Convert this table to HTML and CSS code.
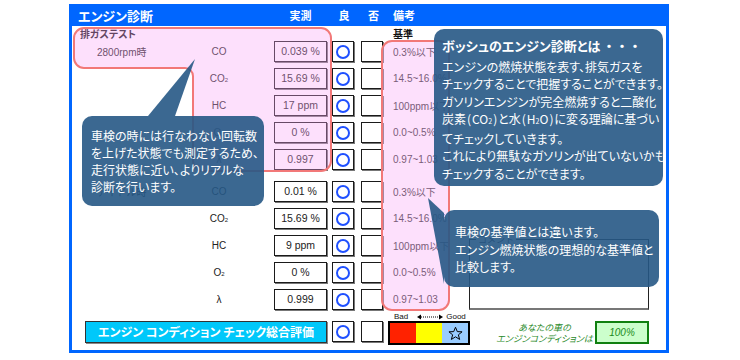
FILE: index.html
```html
<!DOCTYPE html>
<html lang="ja">
<head>
<meta charset="utf-8">
<link rel="stylesheet" href="styles.css">
</head>
<body>
<div class="frame">
  <div class="hdr">
    <div class="title">エンジン診断</div>
    <div class="h-val">実測</div>
    <div class="h-ok">良</div>
    <div class="h-ng">否</div>
    <div class="h-ref">備考</div>
  </div>
  <div class="body">
    <div class="table">
      <div class="sub"><span class="sub-title">排ガステスト</span><span class="sub-ref">基準</span></div>
      <div class="group g1">
        <div class="row"><div class="c-grp">2800rpm時</div><div class="c-gas">CO</div><div class="c-val">0.039 %</div><div class="box c-ok"><span class="ring"></span></div><div class="box c-ng"></div><div class="c-ref">0.3%以下</div></div>
        <div class="row"><div class="c-grp"></div><div class="c-gas">CO<span class="s2">2</span></div><div class="c-val">15.69 %</div><div class="box c-ok"><span class="ring"></span></div><div class="box c-ng"></div><div class="c-ref">14.5~16.0%</div></div>
        <div class="row"><div class="c-grp"></div><div class="c-gas">HC</div><div class="c-val">17 ppm</div><div class="box c-ok"><span class="ring"></span></div><div class="box c-ng"></div><div class="c-ref">100ppm以下</div></div>
        <div class="row"><div class="c-grp"></div><div class="c-gas">O<span class="s2">2</span></div><div class="c-val">0 %</div><div class="box c-ok"><span class="ring"></span></div><div class="box c-ng"></div><div class="c-ref">0.0~0.5%</div></div>
        <div class="row"><div class="c-grp"></div><div class="c-gas">λ</div><div class="c-val">0.997</div><div class="box c-ok"><span class="ring"></span></div><div class="box c-ng"></div><div class="c-ref">0.97~1.03</div></div>
      </div>
      <div class="group g2">
        <div class="row"><div class="c-grp idle">アイドル時</div><div class="c-gas">CO</div><div class="c-val">0.01 %</div><div class="box c-ok"><span class="ring"></span></div><div class="box c-ng"></div><div class="c-ref">0.3%以下</div></div>
        <div class="row"><div class="c-grp"></div><div class="c-gas">CO<span class="s2">2</span></div><div class="c-val">15.69 %</div><div class="box c-ok"><span class="ring"></span></div><div class="box c-ng"></div><div class="c-ref">14.5~16.0%</div></div>
        <div class="row"><div class="c-grp"></div><div class="c-gas">HC</div><div class="c-val">9 ppm</div><div class="box c-ok"><span class="ring"></span></div><div class="box c-ng"></div><div class="c-ref">100ppm以下</div></div>
        <div class="row"><div class="c-grp"></div><div class="c-gas">O<span class="s2">2</span></div><div class="c-val">0 %</div><div class="box c-ok"><span class="ring"></span></div><div class="box c-ng"></div><div class="c-ref">0.0~0.5%</div></div>
        <div class="row"><div class="c-grp"></div><div class="c-gas">λ</div><div class="c-val">0.999</div><div class="box c-ok"><span class="ring"></span></div><div class="box c-ng"></div><div class="c-ref">0.97~1.03</div></div>
      </div>
    </div>
    <div class="side">
      <fieldset class="comment"><legend>コメント</legend></fieldset>
    </div>
  </div>
  <div class="bottom">
    <div class="btn-eval">エンジン コンディション チェック総合評価</div>
    <div class="box c-ok"><span class="ring"></span></div>
    <div class="box c-ng"></div>
    <div class="gauge">
      <div class="gauge-cap"><span class="bad">Bad</span><svg class="arrow" width="26" height="6" viewBox="0 0 26 6"><polygon points="0,3 4,0.5 4,5.5" fill="#000"/><line x1="4" y1="3" x2="22" y2="3" stroke="#000" stroke-width="1" stroke-dasharray="1 1"/><polygon points="26,3 22,0.5 22,5.5" fill="#000"/></svg><span class="good">Good</span></div>
      <div class="gauge-bar">
        <span class="seg red"></span><span class="seg yellow"></span><span class="seg blue"><svg width="15" height="15" viewBox="0 0 24 24"><polygon points="12,2 14.9,9 22.5,9.3 16.6,14.1 18.6,21.5 12,17.3 5.4,21.5 7.4,14.1 1.5,9.3 9.1,9" fill="none" stroke="#000" stroke-width="1.6" stroke-linejoin="miter"/></svg></span>
      </div>
    </div>
    <div class="verdict">あなたの車の<br>エンジンコンディションは</div>
    <div class="score">100%</div>
  </div>

  <svg class="hl" width="594" height="343" viewBox="0 0 594 343">
    <path d="M12 21 H249 A10 10 0 0 1 259 31 V154 A10 10 0 0 1 249 164 H131 A10 10 0 0 1 121 154 V69 A8 8 0 0 0 113 61 H12 A10 10 0 0 1 2 51 V31 A10 10 0 0 1 12 21 Z" class="hl-shape"/>
    <rect x="310" y="34" width="67" height="269" rx="10" ry="10" class="hl-shape"/>
  </svg>

  <div class="callout c1">車検の時には行なわない回転数<br>を上げた状態でも測定するため、<br>走行状態に近い、よりリアルな<br>診断を行います。</div>
  <div class="callout c2"><div class="c2-title">ボッシュのエンジン診断とは<span class="dots">・・・</span></div><div class="c2-body">エンジンの燃焼状態を表す、排気ガスを<br>チェックすることで把握することができます。<br>ガソリンエンジンが完全燃焼すると二酸化<br>炭素<span class="fw">(</span>CO<span class="cs2">2</span><span class="fw">)</span>と水<span class="fw">(</span>H<span class="cs2">2</span>O<span class="fw">)</span>に変る理論に基づい<br>てチェックしていきます。<br>これにより無駄なガソリンが出ていないかも<br>チェックすることができます。</div></div>
  <div class="callout c3">車検の基準値とは違います。<br>エンジン燃焼状態の理想的な基準値と<br>比較します。</div>
</div>
</body>
</html>
```

FILE: styles.css
```css
* { box-sizing: border-box; margin: 0; padding: 0; }
body {
  margin: 0;
  background: #fff;
  font-family: "Liberation Sans", "Noto Sans CJK JP", sans-serif;
  color: #222;
}
.frame {
  position: relative;
  margin: 4px 0 0 69px;
  width: 600px;
  height: 349px;
  border: 3px solid #0066ff;
  background: #fff;
}
.hdr {
  display: flex;
  height: 19px;
  background: #0066ff;
  color: #fff;
  font-weight: bold;
  font-size: 11px;
  line-height: 17px;
  font-family: "Noto Sans CJK JP", sans-serif;
}
.title { width: 202px; padding-left: 6px; font-size: 13px; font-feature-settings: "palt"; }
.h-val { width: 53px; text-align: center; }
.h-ok { margin-left: 5px; width: 22px; text-align: center; padding-left: 2px; }
.h-ng { margin-left: 7px; width: 22px; text-align: center; padding-left: 3px; }
.h-ref { margin-left: 10px; }

.body { display: flex; }
.table { width: 381px; }
.sub {
  display: flex;
  height: 15px;
  line-height: 15px;
  font-size: 10px;
  font-weight: bold;
  color: #111;
  font-family: "Noto Sans CJK JP", sans-serif;
  font-feature-settings: "palt";
}
.sub-title { width: 321px; padding-left: 8px; }
.group { display: flex; flex-direction: column; gap: 6px; }
.g2 { margin-top: 11px; }
.row { display: flex; height: 21px; align-items: center; font-size: 10px; }
.c-grp { width: 120px; padding-left: 25px; white-space: nowrap; }
.c-gas { width: 54px; text-align: center; }
.s2 { font-size: 6px; }
.c-val {
  margin-left: 28px;
  width: 53px;
  height: 21px;
  border: 1px solid #1a1a1a;
  box-shadow: 1px 1px 0 #777;
  text-align: center;
  line-height: 19px;
  font-size: 10.5px;
}
.g2 .c-val { background: #fff; }
.box {
  width: 22px;
  height: 21px;
  border: 1px solid #1a1a1a;
  box-shadow: 1px 1px 0 #777;
  background: #fff;
  display: flex;
  align-items: center;
  justify-content: center;
}
.c-ok { margin-left: 5px; }
.c-ng { margin-left: 7px; }
.ring { width: 14px; height: 14px; border: 2px solid #1f50ff; border-radius: 50%; }
.c-ref { margin-left: 10px; white-space: nowrap; color: #333; }

.side { flex: 1; display: flex; flex-direction: column; justify-content: flex-end; }
.comment {
  margin-left: 16px;
  width: 180px;
  height: 75px;
  border: 1px solid #222;
  border-bottom: 2px solid #777;
  padding: 0 4px;
}
.comment legend {
  margin-left: 2px;
  padding: 0 2px;
  font-size: 9px;
  line-height: 9px;
  color: #223;
  font-family: "Noto Sans CJK JP", sans-serif;
}

.bottom { display: flex; align-items: flex-start; margin-top: 11px; height: 24px; }
.btn-eval {
  margin-left: 13px;
  width: 242px;
  height: 22px;
  background: #00c8fa;
  border: 1px solid #333;
  box-shadow: 1px 1px 0 #888;
  color: #fff;
  font-weight: bold;
  font-size: 12px;
  line-height: 20px;
  text-align: center;
  font-family: "Noto Sans CJK JP", sans-serif;
  font-feature-settings: "palt";
}
.gauge { margin-left: 5px; width: 82px; margin-top: -9px; }
.gauge-cap { display: flex; align-items: center; height: 9px; font-size: 8px; line-height: 9px; color: #111; }
.bad { margin-left: 6px; }
.arrow { margin-left: 9px; }
.good { margin-left: 3px; }
.gauge-bar { display: flex; height: 24px; border: 2px solid #000; }
.seg { flex: 1; display: flex; align-items: center; justify-content: center; }
.red { background: #ff2200; }
.yellow { background: #ffff00; }
.blue { background: #99ccff; }

.verdict {
  margin-left: 24px;
  width: 101px;
  padding-top: 1px;
  text-align: center;
  font-size: 9px;
  line-height: 11px;
  font-style: italic;
  color: #2a8a2a;
  font-family: "Noto Sans CJK JP", sans-serif;
  font-feature-settings: "palt";
}
.score {
  width: 54px;
  height: 23px;
  background: #ccffcc;
  border: 2px solid #108010;
  color: #1a8a1a;
  font-style: italic;
  font-size: 10px;
  line-height: 19px;
  text-align: center;
}

.hl { position: absolute; left: 0; top: 0; pointer-events: none; }
.hl-shape { fill: rgba(249, 166, 246, 0.35); stroke: #f27878; stroke-width: 2; }

.callout {
  position: absolute;
  background: rgba(38, 88, 133, 0.9);
  color: #fff;
  border-radius: 10px;
  font-family: "Noto Sans CJK JP", sans-serif;
  font-size: 12px;
  line-height: 17px;
  font-feature-settings: "palt";
  white-space: nowrap;
}
.c1 { left: 10px; top: 109px; width: 182px; height: 90px; padding: 11px 0 0 9px; }
.c1::before {
  content: "";
  position: absolute;
  bottom: 100%;
  left: 66px;
  width: 47px;
  height: 57px;
  background: rgba(38, 88, 133, 0.9);
  clip-path: polygon(0 100%, 27px 100%, 100% 0);
}
.c2 { left: 362px; top: 22px; width: 229px; height: 157px; padding: 8px 0 0 8px; }
.c2-title { font-weight: bold; font-size: 13px; line-height: 17px; margin-bottom: 4px; }
.dots { font-feature-settings: normal; margin-left: 2px; }
.c2-body { line-height: 17.3px; }
.fw { margin: 0 1px; }
.cs2 { font-size: 7px; }
.c3 { left: 372px; top: 203px; width: 215px; height: 77px; padding: 13px 0 0 11px; line-height: 17.5px; }
.c3::before {
  content: "";
  position: absolute;
  right: 100%;
  top: -12px;
  width: 16px;
  height: 86px;
  background: rgba(38, 88, 133, 0.9);
  clip-path: polygon(0 0, 100% 15px, 100% 100%);
}
```
